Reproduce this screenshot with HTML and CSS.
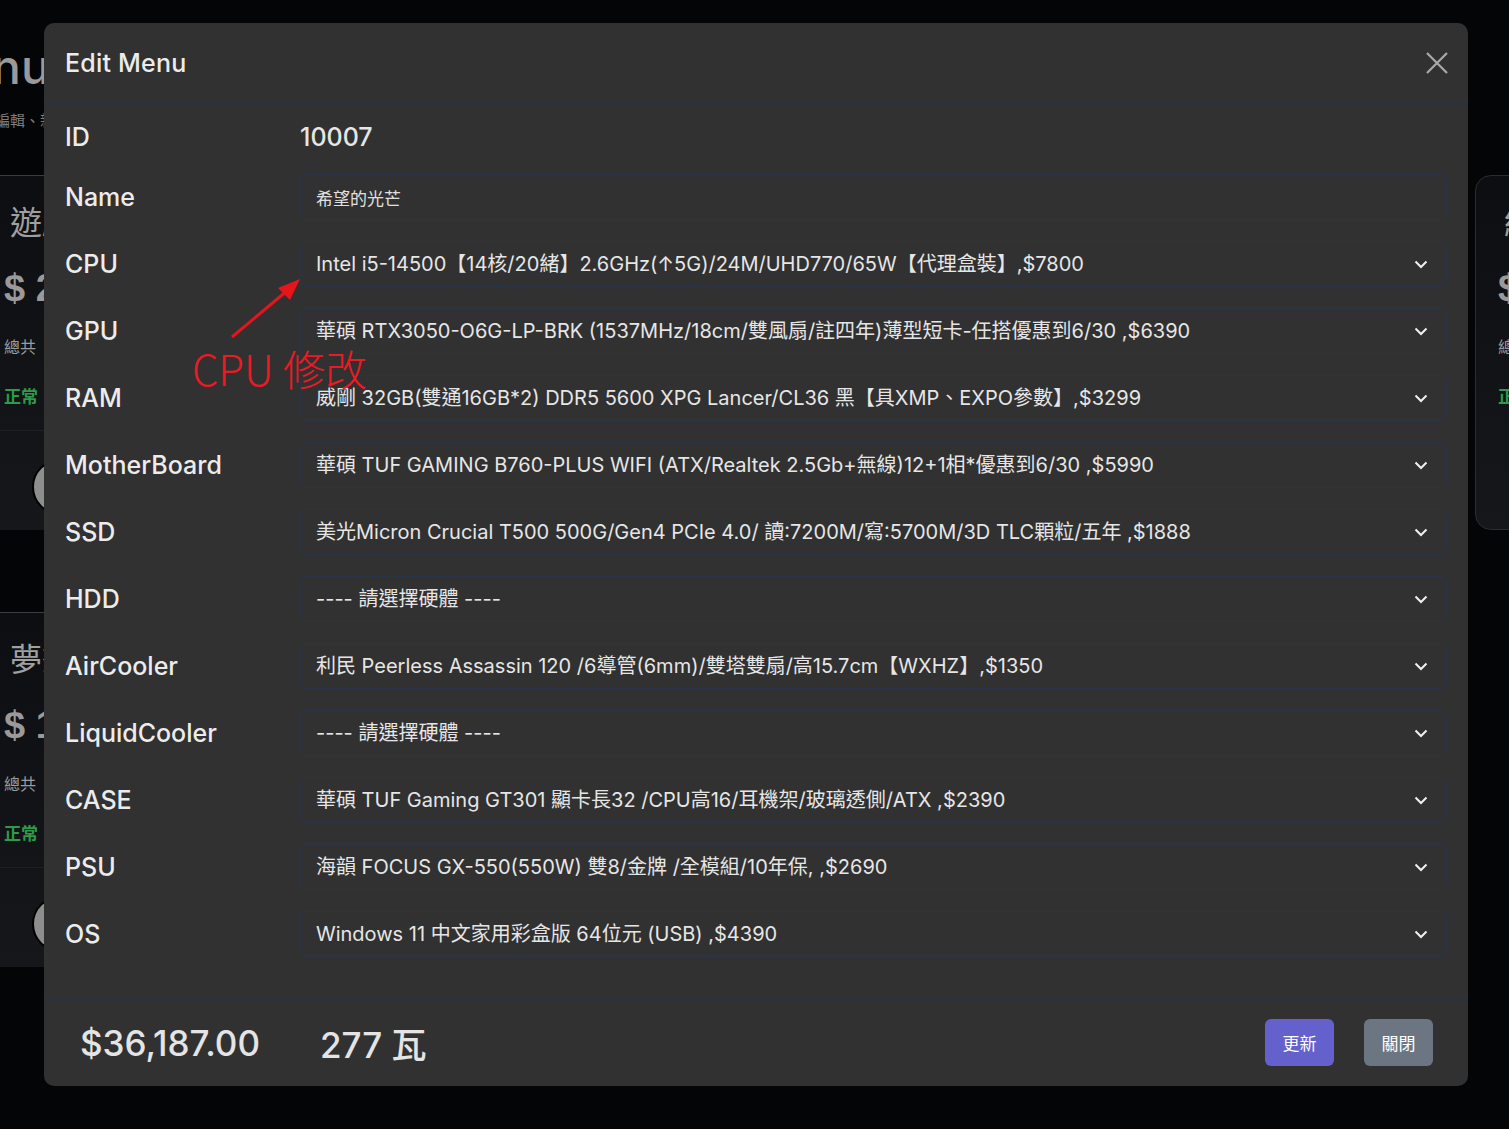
FILE: index.html
```html
<!DOCTYPE html>
<html lang="zh-Hant">
<head>
<meta charset="utf-8">
<title>Edit Menu</title>
<link rel="stylesheet" href="styles.css">
</head>
<body>
<div class="page">
  <header class="page-head">
    <h1 class="page-title">Menu</h1>
    <p class="page-sub">菜單編輯、新增與刪除</p>
  </header>
  <div class="cards">
    <div class="card">
      <div class="card-name">遊戲之王</div>
      <div class="card-price">$ 25,000</div>
      <div class="card-total">總共</div>
      <div class="card-status">正常</div>
      <div class="card-actions"><span class="round-btn"></span></div>
    </div>
    <div class="card"></div>
    <div class="card"></div>
    <div class="card card-right">
      <div class="card-name">給你力量</div>
      <div class="card-price">$ 30,000</div>
      <div class="card-total">總共</div>
      <div class="card-status">正常</div>
    </div>
    <div class="card">
      <div class="card-name">夢想起飛</div>
      <div class="card-price">$ 18,000</div>
      <div class="card-total">總共</div>
      <div class="card-status">正常</div>
      <div class="card-actions"><span class="round-btn"></span></div>
    </div>
  </div>
</div>

<div class="modal">
  <div class="modal-head">
    <h2 class="modal-title">Edit Menu</h2>
    <button class="close-btn" aria-label="close">
      <svg width="24" height="24" viewBox="0 0 24 24"><path d="M2 2 L22 22 M22 2 L2 22" stroke="#a9a9a9" stroke-width="2.2" fill="none"/></svg>
    </button>
  </div>
  <div class="modal-body">
    <div class="label">ID</div><div class="id-value">10007</div>
    <div class="label">Name</div><div class="field"><input class="name-input" type="text" value="希望的光芒"></div>
    <div class="label">CPU</div><div class="field select"><span class="sel-text">Intel i5-14500【14核/20緒】2.6GHz(↑5G)/24M/UHD770/65W【代理盒裝】,$7800</span><svg class="chev" width="14" height="9" viewBox="0 0 14 9"><path d="M1.5 1.5 L7 7 L12.5 1.5" stroke="#f0f0f0" stroke-width="2" fill="none"/></svg></div>
    <div class="label">GPU</div><div class="field select"><span class="sel-text">華碩 RTX3050-O6G-LP-BRK (1537MHz/18cm/雙風扇/註四年)薄型短卡-任搭優惠到6/30 ,$6390</span><svg class="chev" width="14" height="9" viewBox="0 0 14 9"><path d="M1.5 1.5 L7 7 L12.5 1.5" stroke="#f0f0f0" stroke-width="2" fill="none"/></svg></div>
    <div class="label">RAM</div><div class="field select"><span class="sel-text">威剛 32GB(雙通16GB*2) DDR5 5600 XPG Lancer/CL36 黑【具XMP、EXPO參數】,$3299</span><svg class="chev" width="14" height="9" viewBox="0 0 14 9"><path d="M1.5 1.5 L7 7 L12.5 1.5" stroke="#f0f0f0" stroke-width="2" fill="none"/></svg></div>
    <div class="label">MotherBoard</div><div class="field select"><span class="sel-text">華碩 TUF GAMING B760-PLUS WIFI (ATX/Realtek 2.5Gb+無線)12+1相*優惠到6/30 ,$5990</span><svg class="chev" width="14" height="9" viewBox="0 0 14 9"><path d="M1.5 1.5 L7 7 L12.5 1.5" stroke="#f0f0f0" stroke-width="2" fill="none"/></svg></div>
    <div class="label">SSD</div><div class="field select"><span class="sel-text">美光Micron Crucial T500 500G/Gen4 PCIe 4.0/ 讀:7200M/寫:5700M/3D TLC顆粒/五年 ,$1888</span><svg class="chev" width="14" height="9" viewBox="0 0 14 9"><path d="M1.5 1.5 L7 7 L12.5 1.5" stroke="#f0f0f0" stroke-width="2" fill="none"/></svg></div>
    <div class="label">HDD</div><div class="field select"><span class="sel-text">---- 請選擇硬體 ----</span><svg class="chev" width="14" height="9" viewBox="0 0 14 9"><path d="M1.5 1.5 L7 7 L12.5 1.5" stroke="#f0f0f0" stroke-width="2" fill="none"/></svg></div>
    <div class="label">AirCooler</div><div class="field select"><span class="sel-text">利民 Peerless Assassin 120 /6導管(6mm)/雙塔雙扇/高15.7cm【WXHZ】,$1350</span><svg class="chev" width="14" height="9" viewBox="0 0 14 9"><path d="M1.5 1.5 L7 7 L12.5 1.5" stroke="#f0f0f0" stroke-width="2" fill="none"/></svg></div>
    <div class="label">LiquidCooler</div><div class="field select"><span class="sel-text">---- 請選擇硬體 ----</span><svg class="chev" width="14" height="9" viewBox="0 0 14 9"><path d="M1.5 1.5 L7 7 L12.5 1.5" stroke="#f0f0f0" stroke-width="2" fill="none"/></svg></div>
    <div class="label">CASE</div><div class="field select"><span class="sel-text">華碩 TUF Gaming GT301 顯卡長32 /CPU高16/耳機架/玻璃透側/ATX ,$2390</span><svg class="chev" width="14" height="9" viewBox="0 0 14 9"><path d="M1.5 1.5 L7 7 L12.5 1.5" stroke="#f0f0f0" stroke-width="2" fill="none"/></svg></div>
    <div class="label">PSU</div><div class="field select"><span class="sel-text">海韻 FOCUS GX-550(550W) 雙8/金牌 /全模組/10年保, ,$2690</span><svg class="chev" width="14" height="9" viewBox="0 0 14 9"><path d="M1.5 1.5 L7 7 L12.5 1.5" stroke="#f0f0f0" stroke-width="2" fill="none"/></svg></div>
    <div class="label">OS</div><div class="field select"><span class="sel-text">Windows 11 中文家用彩盒版 64位元 (USB) ,$4390</span><svg class="chev" width="14" height="9" viewBox="0 0 14 9"><path d="M1.5 1.5 L7 7 L12.5 1.5" stroke="#f0f0f0" stroke-width="2" fill="none"/></svg></div>
  </div>
  <div class="modal-foot">
    <div class="totals">
      <span class="total-price">$36,187.00</span>
      <span class="total-watt">277 瓦</span>
    </div>
    <div class="actions">
      <button class="btn btn-primary">更新</button>
      <button class="btn btn-secondary">關閉</button>
    </div>
  </div>
  <div class="annotation">
    <svg class="anno-arrow" width="80" height="70" viewBox="0 0 80 70"><path d="M2 68 L58 21" stroke="#e8141c" stroke-width="3" fill="none"/><path d="M70 10 L48 19 L60 31 Z" fill="#e8141c"/></svg>
    <span class="anno-text">CPU 修改</span>
  </div>
</div>
</body>
</html>
```

FILE: styles.css
```css
* { box-sizing: border-box; }
html, body { margin: 0; padding: 0; }
body {
  background: #040507;
  width: 1509px;
  height: 1129px;
  overflow: hidden;
  font-family: "Inter", "Noto Sans CJK TC", sans-serif;
  color: #e6e6e6;
  position: relative;
}

/* background page */
.page { padding-top: 44px; }
.page-head { height: 131px; padding-left: 0; }
.page-title {
  margin: 0 0 0 -80px;
  font-size: 48px;
  line-height: 46px;
  font-weight: 500;
  color: #9a9a9a;
}
.page-sub {
  margin: 19px 0 0 -35px;
  font-size: 15px;
  color: #7d7d7d;
  font-family: "Noto Sans CJK TC", sans-serif;
  white-space: nowrap;
}
.cards {
  display: grid;
  grid-template-columns: repeat(4, 482px);
  column-gap: 15.67px;
  row-gap: 82px;
  margin-left: -18px;
}
.card {
  height: 355px;
  background: linear-gradient(180deg, #0c0e11 0%, #15171b 100%);
  border-top: 1px solid #3a3c40;
  padding: 22px 0 0 22px;
  position: relative;
  font-family: "Noto Sans CJK TC", sans-serif;
  overflow: hidden;
}
.card-right {
  border: 1px solid #2a2d33;
  border-radius: 16px;
}
.card-name { font-size: 32px; color: #a0a0a0; line-height: 44px; margin-left: 6px; white-space: nowrap; }
.card-price { font-size: 38px; font-weight: 700; color: #9a9a9a; line-height: 44px; margin-top: 24px; font-family: "Liberation Sans", sans-serif; }
.card-total { font-size: 16px; color: #9c9c9c; margin-top: 24px; line-height: 24px; }
.card-status { font-size: 17px; font-weight: 700; color: #2e9a4a; margin-top: 26px; line-height: 24px; }
.card-actions {
  border-top: 1px solid #1d2024;
  margin: 22px 0 0 -22px;
  padding: 28px 0 0 50px;
}
.round-btn {
  display: block;
  width: 56px; height: 56px;
  border-radius: 50%;
  background: #8e8e8e;
  border: 2px solid #000;
}

/* modal */
.modal {
  position: absolute;
  left: 44px;
  top: 23px;
  width: 1424px;
  background: #313131;
  border-radius: 10px;
}
.modal-head {
  height: 80px;
  display: flex;
  align-items: center;
  justify-content: space-between;
  padding: 0 19px 0 21px;
  border-bottom: 1px solid #2b3244;
}
.modal-title {
  margin: 0;
  font-size: 25px;
  font-weight: 500;
  color: #ececec;
  letter-spacing: 0.2px;
}
.close-btn {
  background: none;
  border: 0;
  padding: 0;
  width: 24px; height: 24px;
  display: flex;
}
.modal-body {
  display: grid;
  grid-template-columns: 235px 1fr;
  row-gap: 21px;
  align-items: center;
  padding: 18px 21px 41px 21px;
}
.label {
  font-size: 25px;
  font-weight: 500;
  color: #ececec;
  line-height: 32px;
}
.id-value {
  font-size: 25px;
  font-weight: 500;
  color: #e6e6e6;
  line-height: 32px;
}
.field {
  height: 46px;
  border: 1px solid #2b3446;
  border-radius: 6px;
  display: flex;
  align-items: center;
  padding: 0 18px 0 15px;
}
.name-input {
  width: 100%;
  background: transparent;
  border: 0;
  outline: none;
  color: #e0e0e0;
  font-family: "Noto Sans CJK TC", sans-serif;
  font-size: 17px;
  padding: 0;
}
.select { justify-content: space-between; }
.sel-text {
  font-size: 20px;
  line-height: 24px;
  color: #e6e6e6;
  white-space: nowrap;
  letter-spacing: 0;
}
.chev { flex: none; }

.modal-foot {
  height: 88px;
  border-top: 1px solid #2b3244;
  display: flex;
  align-items: center;
  justify-content: space-between;
  padding: 0 35px 0 36px;
}
.totals { display: flex; gap: 60px; align-items: center; }
.total-price, .total-watt {
  font-size: 35px;
  font-weight: 500;
  color: #e4e4e4;
}
.actions { display: flex; gap: 30px; }
.btn {
  width: 69px;
  height: 47px;
  border: 0;
  border-radius: 6px;
  color: #fff;
  font-family: "Noto Sans CJK TC", sans-serif;
  font-size: 17px;
}
.btn-primary { background: #6461cc; }
.btn-secondary { background: #6c7682; }

/* annotation overlay */
.annotation {
  position: absolute;
  left: 148px;
  top: 246px;
  width: 200px;
  height: 130px;
  pointer-events: none;
}
.anno-arrow { position: absolute; left: 38px; top: 0; }
.anno-text {
  position: absolute;
  left: 0;
  top: 74px;
  font-family: "Noto Sans CJK TC", sans-serif;
  font-weight: 300;
  font-size: 42px;
  line-height: 50px;
  color: #ea1b24;
  white-space: nowrap;
}
```
